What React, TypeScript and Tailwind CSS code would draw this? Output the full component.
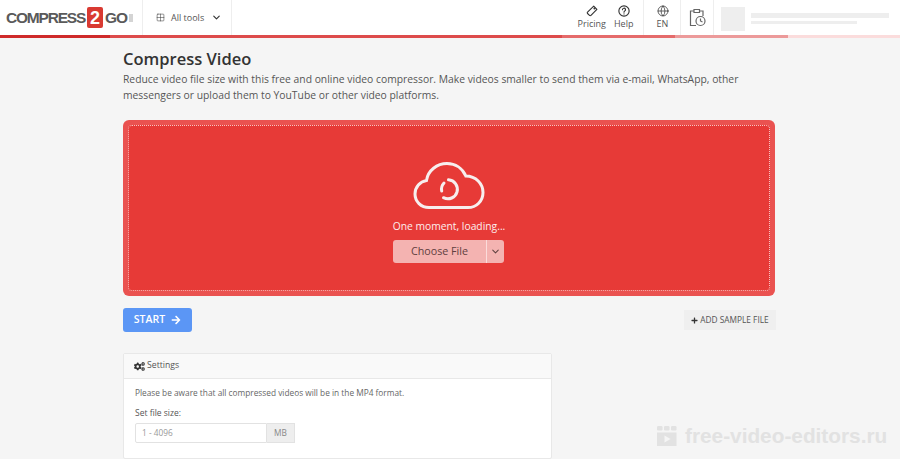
import { ChevronDown, Globe, Grid2X2 } from "lucide-react";
import { FaArrowRight, FaCogs, FaPlus } from "react-icons/fa";

function Logo() {
  return (
    <div className="flex items-center font-['Liberation_Sans',sans-serif] font-bold text-[#5a5a5a] tracking-[-1.2px] leading-none">
      <span className="text-[15.500px]">COMPRESS</span>
      <span className="ml-[2px] mr-[2px] w-[16px] h-[21px] bg-[#d93a32] rounded-[2px] text-white text-[18px] tracking-normal flex items-center justify-center">
        2
      </span>
      <span className="text-[15.500px]">GO</span>
      <span className="ml-[2px] w-[4px] h-[8px] bg-[#d4d4d4]" />
    </div>
  );
}

function CloudSpinner() {
  return (
    <svg width="72" height="48" viewBox="0 0 72 48" fill="none" stroke="#f7eeee" strokeWidth="3" strokeLinecap="round">
      <path d="M16 45.500C8 45.500 2 39.500 2 32c0-7 5-12.600 11.500-13.600C15 8.500 24 1.600 34 1.600c8.500 0 15.500 4.800 18.800 12.400C63 14 70 22 70 30.500c0 8.500-6.500 15-15 15Z" />
      <path d="M35.500 17.800a9.500 9.500 0 1 1 -5 17.900" />
      <path d="M31 21a9 9 0 0 0 -2.300 8" />
    </svg>
  );
}

function PricingIcon() {
  return (
    <svg width="12" height="12" viewBox="0 0 14 14" fill="none" stroke="#333" strokeWidth="1.300" strokeLinejoin="round">
      <path d="M9 1.300 12.700 5 5.800 12.200a1.200 1.200 0 0 1-1.700 0L1.800 9.900a1.200 1.200 0 0 1 0-1.700Z" />
      <circle cx="9.800" cy="4.200" r=".5" />
    </svg>
  );
}

function HelpIcon() {
  return (
    <svg width="12" height="12" viewBox="0 0 14 14" fill="none" stroke="#333" strokeWidth="1.300" strokeLinecap="round">
      <circle cx="7" cy="7" r="6" />
      <path d="M5.200 5.500a1.800 1.800 0 1 1 2.600 1.600C7.200 7.500 7 7.800 7 8.500" />
      <path d="M7 10.300v.2" />
    </svg>
  );
}

function HistoryIcon() {
  return (
    <svg width="17" height="19" viewBox="0 0 17 19" fill="none" stroke="#666" strokeWidth="1.200">
      <path d="M5 3H1.500v14.500H7" />
      <path d="M10.500 3h3.500v5" />
      <path d="M5 1.500h5.500v3H5Z" />
      <circle cx="11.500" cy="13" r="4.500" />
      <path d="M11.500 10.500V13l2 1" />
    </svg>
  );
}

function FilmIcon() {
  return (
    <svg width="20" height="20" viewBox="0 0 20 20" fill="#e2e2e2">
      <rect x="0" y="0" width="5.500" height="4.500" rx="1.200" />
      <rect x="7" y="0" width="5.500" height="4.500" rx="1.200" />
      <rect x="14" y="0" width="5.500" height="4.500" rx="1.200" />
      <path d="M0 6.500h19.500V20H0Z M7.500 9.500v7l6-3.500Z" fillRule="evenodd" />
    </svg>
  );
}

export default function App() {
  return (
    <div className="relative h-[459px] w-[900px] overflow-hidden bg-[#f5f5f5] font-['Open_Sans',sans-serif] text-[#444]">
      {/* Header */}
      <header className="bg-white h-[35px] flex items-stretch">
        <div className="w-[143px] pl-[6px] flex items-center border-r border-[#eee]">
          <Logo />
        </div>
        <div className="w-[89px] flex items-center pl-[13px] border-r border-[#eee] text-[#555]">
          <Grid2X2 size={9} strokeWidth={1.500} className="text-[#444]" />
          <span className="ml-[6px] text-[9px]">All tools</span>
          <ChevronDown size={11} strokeWidth={2.500} className="ml-[7px] text-[#333]" />
        </div>
        <div className="flex-1" />
        <div className="w-[69px] flex justify-center gap-[8px] pr-[7px] pt-[5px] border-r border-[#eee] text-[9px] text-[#555] leading-[12px]">
          <div className="flex flex-col items-center gap-[1px]">
            <PricingIcon />
            <span>Pricing</span>
          </div>
          <div className="flex flex-col items-center gap-[1px]">
            <HelpIcon />
            <span>Help</span>
          </div>
        </div>
        <div className="w-[37px] flex flex-col items-center pt-[5px] pl-[1px] gap-[1px] border-r border-[#eee] text-[9px] text-[#555] leading-[12px]">
          <Globe size={12} strokeWidth={1.500} className="text-[#333]" />
          <span>EN</span>
        </div>
        <div className="w-[33px] flex items-center justify-center pl-[1px] border-r border-[#eee]">
          <HistoryIcon />
        </div>
        <div className="w-[186px] flex items-center pl-[7px] pt-[2px]">
          <div className="w-[24px] h-[24px] bg-[#eeeeee]" />
          <div className="ml-[6px] flex flex-col gap-[3px]">
            <div className="w-[138px] h-[5px] bg-[#eeeeee]" />
            <div className="w-[106px] h-[3px] bg-[#eeeeee]" />
          </div>
        </div>
      </header>
      <div className="flex h-[3px]">
        <div className="w-[110px] bg-[#cf2a2a]" />
        <div className="w-[452px] bg-[#dd4b4b]" />
        <div className="w-[113px] bg-[#e56b6b]" />
        <div className="w-[113px] bg-[#ec9a9a]" />
        <div className="flex-1 bg-[#fbdcdc]" />
      </div>

      {/* Main */}
      <main className="w-[652px] ml-[123px]">
        <h1 className="mt-[9px] text-[16.500px] leading-[24px] font-semibold text-[#333]">Compress Video</h1>
        <p className="mt-[1px] text-[10.330px] leading-[15.500px] text-[#555] w-[650px]">
          Reduce video file size with this free and online video compressor. Make videos smaller to send them via e-mail, WhatsApp, other messengers or upload them to YouTube or other video platforms.
        </p>

        {/* Upload box */}
        <div className="mt-[17px] h-[176px] bg-[#ea5250] rounded-[6px] p-[5px]">
          <div className="h-full bg-[#e73a37] border border-dotted border-[#f7c4c2] rounded-[4px] flex flex-col items-center pt-[36px]">
            <CloudSpinner />
            <p className="mt-[8px] text-[10.300px] leading-[16px] text-[#fdeeee]">One moment, loading...</p>
            <div className="mt-[6px] mr-[1px] flex h-[23px] rounded-[3px] bg-[#f4b3b1] text-[#5f4040] text-[10.700px]">
              <span className="w-[93px] flex items-center justify-center">Choose File</span>
              <span className="w-[18px] flex items-center justify-center border-l border-[#fbdcdb]">
                <ChevronDown size={11} strokeWidth={2.200} />
              </span>
            </div>
          </div>
        </div>

        {/* Actions */}
        <div className="mt-[12px] w-[653px] flex items-center justify-between">
          <button className="w-[69px] h-[24px] bg-[#5b96f5] rounded-[3px] text-white text-[10.500px] font-semibold flex items-center justify-center gap-[6px]">
            START
            <FaArrowRight size={10} />
          </button>
          <button className="w-[92px] h-[20px] bg-[#efefef] text-[#555] text-[8.300px] flex items-center justify-center gap-[2px]">
            <FaPlus size={7} className="text-[#333]" />
            ADD SAMPLE FILE
          </button>
        </div>

        {/* Settings */}
        <section className="mt-[21px] w-[429px] bg-white border border-[#e8e8e8] rounded-[2px]">
          <div className="h-[25px] bg-[#f9f9f9] border-b border-[#e8e8e8] flex items-center pl-[10px] gap-[2px] text-[8.700px] text-[#555]">
            <FaCogs size={11} className="text-[#333]" />
            Settings
          </div>
          <div className="pl-[11px] pt-[7px] pb-[15px] text-[8.300px] leading-[14px]">
            <p className="text-[#666]">Please be aware that all compressed videos will be in the MP4 format.</p>
            <p className="mt-[6px] text-[8.500px] text-[#555] font-medium">Set file size:</p>
            <div className="mt-[3px] flex h-[20px] w-[160px]">
              <div className="flex-1 border border-[#e2e2e2] rounded-l-[2px] flex items-center pl-[6px] text-[#999]">1 - 4096</div>
              <div className="w-[28px] bg-[#eeeeee] border border-l-0 border-[#e2e2e2] flex items-center justify-center text-[#888]">MB</div>
            </div>
          </div>
        </section>
      </main>

      {/* Watermark */}
      <div className="absolute left-[657px] top-[426px] flex items-center gap-[8px] font-['Liberation_Sans',sans-serif] font-bold text-[20.800px] leading-[20px] text-[#e2e2e2]">
        <FilmIcon />
        free-video-editors.ru
      </div>
    </div>
  );
}
